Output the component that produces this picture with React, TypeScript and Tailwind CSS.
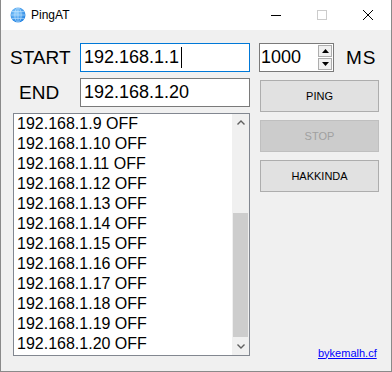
import React from "react";

const font = { fontFamily: '"Liberation Sans", Arial, sans-serif' };

const items = Array.from({ length: 12 }, (_, i) => `192.168.1.${i + 9} OFF`);

const Globe = () => (
  <svg width="16" height="16" viewBox="0 0 16 16">
    <defs>
      <radialGradient id="g" cx="40%" cy="35%" r="70%">
        <stop offset="0%" stopColor="#8fd0ff" />
        <stop offset="100%" stopColor="#1e7fe0" />
      </radialGradient>
    </defs>
    <circle cx="8" cy="8" r="7.5" fill="url(#g)" />
    <g stroke="#cfeaff" strokeWidth="0.7" fill="none" opacity="0.8">
      <ellipse cx="8" cy="8" rx="3.2" ry="7.3" />
      <line x1="8" y1="0.5" x2="8" y2="15.5" />
      <line x1="0.5" y1="8" x2="15.5" y2="8" />
      <path d="M1.8 4.5 H14.2 M1.8 11.5 H14.2" />
    </g>
  </svg>
);

const TitleBar = () => (
  <div className="flex h-[30px] items-center bg-white">
    <div className="ml-[9px]">
      <Globe />
    </div>
    <span className="ml-[5px] text-[12px] text-black">PingAT</span>
    <div className="ml-auto flex h-full items-center">
      <div className="flex h-full w-[46px] items-center justify-center">
        <div className="h-px w-[10px] bg-black" />
      </div>
      <div className="flex h-full w-[46px] items-center justify-center">
        <div className="h-[10px] w-[10px] border border-[#cccccc]" />
      </div>
      <div className="flex h-full w-[46px] items-center justify-center">
        <svg width="10" height="10" viewBox="0 0 10 10">
          <path d="M0 0 L10 10 M10 0 L0 10" stroke="#000" strokeWidth="1" />
        </svg>
      </div>
    </div>
  </div>
);

const Button = ({ label, disabled }: { label: string; disabled?: boolean }) => (
  <div
    className={
      disabled
        ? "flex h-[32px] w-[119px] items-center justify-center border border-[#bfbfbf] bg-[#cccccc] text-[11px] text-[#a0a0a0]"
        : "flex h-[32px] w-[119px] items-center justify-center border border-[#adadad] bg-[#e1e1e1] text-[11px] text-black"
    }
  >
    {label}
  </div>
);

const Chevron = ({ up }: { up?: boolean }) => (
  <svg width="8" height="5" viewBox="0 0 8 5">
    <path
      d={up ? "M0.5 4.5 L4 1 L7.5 4.5" : "M0.5 0.5 L4 4 L7.5 0.5"}
      stroke="#606060"
      strokeWidth="1.4"
      fill="none"
    />
  </svg>
);

const Tri = ({ up }: { up?: boolean }) => (
  <svg width="7" height="4" viewBox="0 0 7 4">
    <path d={up ? "M0 4 L3.5 0 L7 4 Z" : "M0 0 L3.5 4 L7 0 Z"} fill="#000" />
  </svg>
);

export default function App() {
  return (
    <div
      className="flex h-[372px] w-[392px] flex-col border-x border-b border-[#8a8a8a] bg-[#f0f0f0]"
      style={font}
    >
      <TitleBar />
      <div className="flex flex-1 pt-[13px]">
        {/* left column */}
        <div className="flex w-[249px] flex-col">
          <div className="flex h-[29px] items-center">
            <span className="ml-[9px] w-[70px] text-[19px] leading-none text-black">START</span>
            <div className="flex h-[29px] w-[170px] items-center border border-[#0078d7] bg-white pl-[3px] text-[18px] text-black">
              192.168.1.1
              <div className="ml-[2px] h-[21px] w-px bg-black" />
            </div>
          </div>
          <div className="mt-[6px] flex h-[29px] items-center">
            <span className="ml-[18px] w-[61px] text-[19px] leading-none text-black">END</span>
            <div className="flex h-[29px] w-[170px] items-center border border-[#7a7a7a] bg-white pl-[3px] text-[18px] text-black">
              192.168.1.20
            </div>
          </div>
          <div className="ml-[12px] mt-[6px] flex h-[243px] w-[237px] border border-[#828790] bg-white">
            <div className="flex-1 pl-[3px] text-[16px] leading-[20px] text-black">
              {items.map((t) => (
                <div key={t} className="h-[20px] whitespace-nowrap">
                  {t}
                </div>
              ))}
            </div>
            <div className="flex w-[17px] flex-col bg-[#f0f0f0]">
              <div className="flex h-[17px] items-center justify-center">
                <Chevron up />
              </div>
              <div className="flex flex-1 flex-col pt-[82px] pb-[1px]">
                <div className="mx-[1px] h-[124px] bg-[#cdcdcd]" />
              </div>
              <div className="flex h-[17px] items-center justify-center">
                <Chevron />
              </div>
            </div>
          </div>
        </div>

        {/* right column */}
        <div className="ml-[9px] flex flex-1 flex-col">
          <div className="flex h-[29px] items-center">
            <div className="flex h-[29px] w-[75px] border border-[#7a7a7a] bg-white">
              <div className="flex flex-1 items-center pl-[1px] text-[18px] text-black">1000</div>
              <div className="flex w-[16px] flex-col gap-px p-px">
                <div className="flex flex-1 items-center justify-center border border-[#adadad] bg-[#f0f0f0]">
                  <Tri up />
                </div>
                <div className="flex flex-1 items-center justify-center border border-[#adadad] bg-[#f0f0f0]">
                  <Tri />
                </div>
              </div>
            </div>
            <span className="ml-[12px] text-[19px] leading-none tracking-[1px] text-black">MS</span>
          </div>
          <div className="ml-px mt-[8px] flex flex-col gap-[8px]">
            <Button label="PING" />
            <Button label="STOP" disabled />
            <Button label="HAKKINDA" />
          </div>
          <div className="mt-auto mb-[10px] ml-[59px] text-[11px] text-[#0000ff] underline">
            bykemalh.cf
          </div>
        </div>
      </div>
    </div>
  );
}
